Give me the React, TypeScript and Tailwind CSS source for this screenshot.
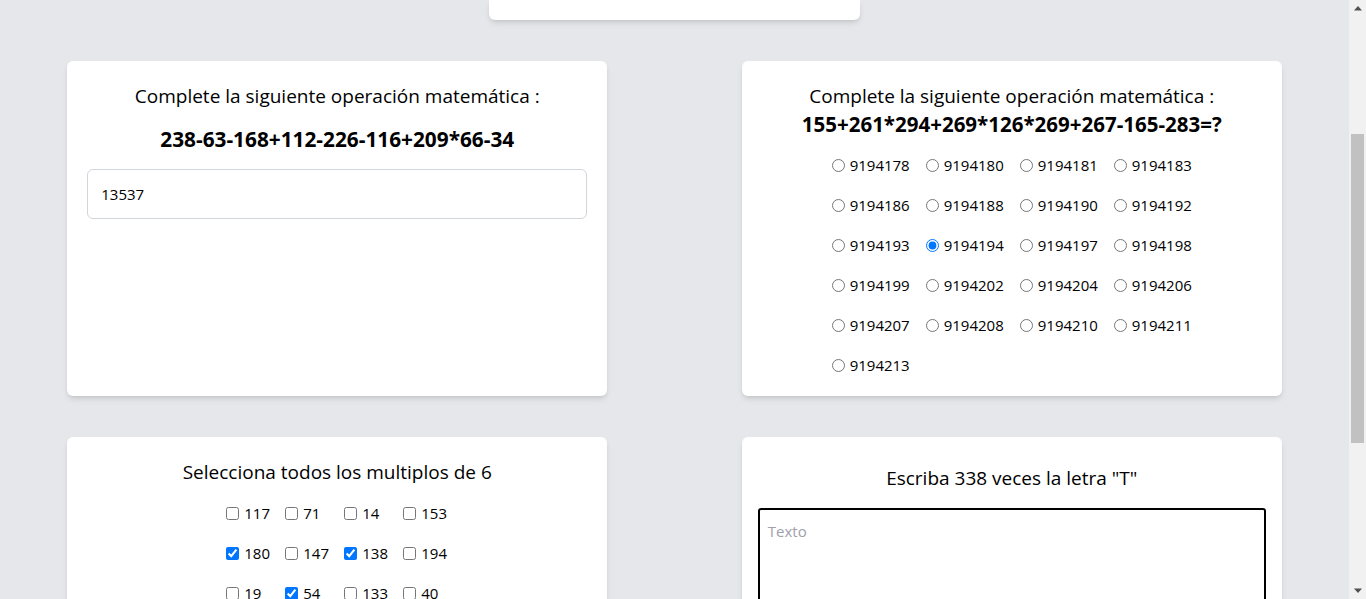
import React from "react";

const radios = [
  "9194178", "9194180", "9194181", "9194183",
  "9194186", "9194188", "9194190", "9194192",
  "9194193", "9194194", "9194197", "9194198",
  "9194199", "9194202", "9194204", "9194206",
  "9194207", "9194208", "9194210", "9194211",
  "9194213",
];

const checks: [string, boolean][] = [
  ["117", false], ["71", false], ["14", false], ["153", false],
  ["180", true], ["147", false], ["138", true], ["194", false],
  ["19", false], ["54", true], ["133", false], ["40", false],
];

function Card({ className, children }: { className: string; children: React.ReactNode }) {
  return <div className={"w-[540px] rounded-md bg-white shadow-md " + className}>{children}</div>;
}

function Scrollbar() {
  return (
    <div className="flex h-full w-[17px] shrink-0 flex-col bg-[#f1f1f1]">
      <div className="flex h-[17px] items-center justify-center">
        <svg width="8" height="5" viewBox="0 0 8 5">
          <polygon points="4,0 8,4.5 0,4.5" fill="#505050" />
        </svg>
      </div>
      <div className="h-[117px]" />
      <div className="mx-[2px] h-[309px] bg-[#c1c1c1]" />
      <div className="flex-1" />
      <div className="flex h-[17px] items-center justify-center">
        <svg width="8" height="5" viewBox="0 0 8 5">
          <polygon points="0,0.5 8,0.5 4,5" fill="#505050" />
        </svg>
      </div>
    </div>
  );
}

export default function App() {
  return (
    <div className="flex h-[599px] w-full overflow-hidden bg-[#e5e7eb] font-['Open_Sans',sans-serif] text-black">
      <div className="flex min-w-0 flex-1 flex-col">
        <div className="mx-auto h-5 w-[371px] shrink-0 rounded-b-md bg-white shadow-md" />

        <div className="mt-[41px] grid grid-cols-2 justify-items-center gap-y-[41px]">
          {/* Card 1 */}
          <Card className="px-5 pt-[21px]">
            <p className="text-center text-[19px] leading-[28px]">Complete la siguiente operación matemática :</p>
            <p className="mt-[15px] text-center text-[20.8px] font-bold leading-[28px]">238-63-168+112-226-116+209*66-34</p>
            <input
              readOnly
              value="13537"
              className="mt-[16px] h-[50px] w-full rounded-md border border-gray-300 bg-white px-[13px] text-[15px] text-black outline-none"
            />
          </Card>

          {/* Card 2 */}
          <Card className="px-5 pb-[11px] pt-[21px]">
            <p className="text-center text-[19px] leading-[28px]">Complete la siguiente operación matemática :</p>
            <p className="text-center text-[20.5px] font-bold leading-[28px]">155+261*294+269*126*269+267-165-283=?</p>
            <div className="mt-[7px] grid grid-cols-[repeat(4,auto)] justify-center gap-x-4">
              {radios.map((r) => (
                <label key={r} className="flex h-10 items-center gap-[5px] text-[15px]">
                  <input type="radio" name="op" defaultChecked={r === "9194194"} className="m-0 h-[13px] w-[13px]" />
                  <span>{r}</span>
                </label>
              ))}
            </div>
          </Card>

          {/* Card 3 */}
          <Card className="px-5 pb-5 pt-[21px]">
            <p className="text-center text-[19px] leading-[28px]">Selecciona todos los multiplos de 6</p>
            <div className="mt-[7px] grid grid-cols-[repeat(4,45px)] justify-center gap-x-[14px]">
              {checks.map(([n, c]) => (
                <label key={n} className="flex h-10 items-center gap-[5px] text-[15px]">
                  <input type="checkbox" defaultChecked={c} className="m-0 h-[13px] w-[13px]" />
                  <span>{n}</span>
                </label>
              ))}
            </div>
          </Card>

          {/* Card 4 */}
          <Card className="px-4 pb-5 pt-[27px]">
            <p className="text-center text-[19px] leading-[28px]">Escriba 338 veces la letra "T"</p>
            <textarea
              placeholder="Texto"
              className="mt-4 block h-[150px] w-full resize-none rounded-[3px] border-2 border-black px-2 py-[10px] text-[15px] outline-none placeholder:text-[#a0a0ab]"
            />
          </Card>
        </div>
      </div>
      <Scrollbar />
    </div>
  );
}
